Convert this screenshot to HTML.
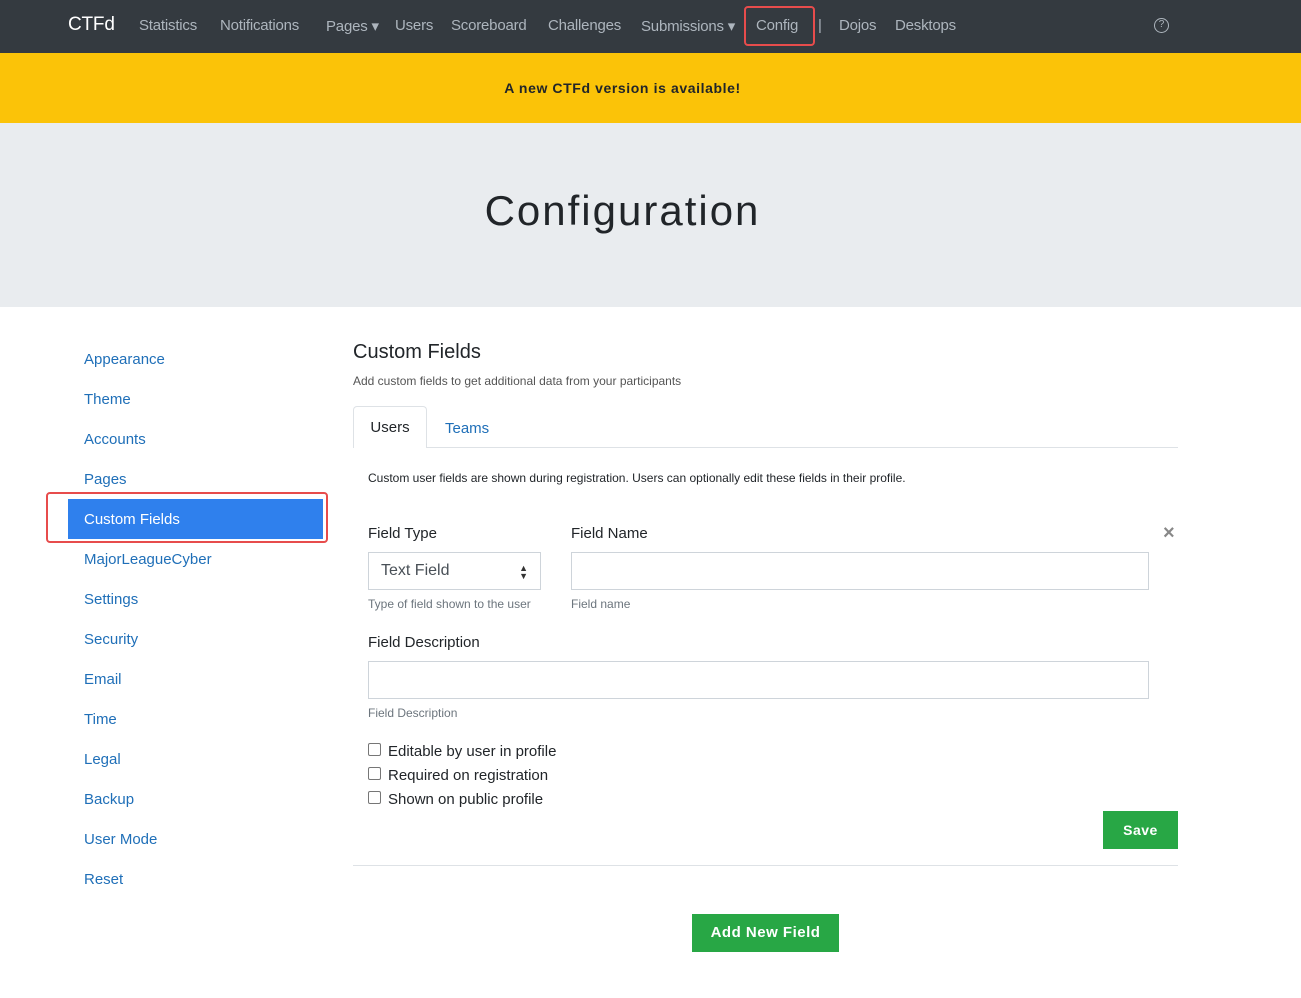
<!DOCTYPE html>
<html><head><meta charset="utf-8"><style>
*{box-sizing:border-box}
body{margin:0;width:1301px;height:998px;overflow:hidden;font-family:"Liberation Sans",sans-serif;background:#fff;color:#212529}
.nav{height:53px;background:#343a40;position:relative}
.nav span{position:absolute;top:17px;font-size:15px;color:#adb5bd;letter-spacing:-0.2px}
.brand{color:#fff!important;font-size:19px!important;top:14px!important}
.banner{height:70px;background:#fbc308}
.banner div{width:1245px;text-align:center;line-height:70px;font-weight:bold;font-size:14px;letter-spacing:0.6px}
.jumbo{height:184px;background:#e9ecef}
.jumbo h1{width:1245px;text-align:center;margin:0;padding-top:64px;font-weight:normal;font-size:42px;letter-spacing:2px;color:#212529}
.side a{position:absolute;left:84px;font-size:15px;color:#1f6fb8;text-decoration:none}
.abs{position:absolute}
.inp{position:absolute;border:1px solid #ced4da;background:#fff}
.small{font-size:12px;color:#6c757d}
.lbl{font-size:15px}
.btn{position:absolute;background:#28a745;color:#fff;font-weight:bold;font-size:14px;text-align:center;letter-spacing:0.5px}
.cb{position:absolute;left:368px;width:13px;height:13px;border:1px solid #767676;border-radius:2px;background:#fff}
</style></head><body>
<div class="nav">
<span class="brand" style="left:68px">CTFd</span>
<span style="left:139px">Statistics</span>
<span style="left:220px">Notifications</span>
<span style="left:326px">Pages ▾</span>
<span style="left:395px">Users</span>
<span style="left:451px">Scoreboard</span>
<span style="left:548px">Challenges</span>
<span style="left:641px">Submissions ▾</span>
<span style="left:756px">Config</span>
<span style="left:818px">|</span>
<span style="left:839px">Dojos</span>
<span style="left:895px">Desktops</span>
<div class="abs" style="left:744px;top:6px;width:71px;height:40px;border:2.5px solid #e74c4c;border-radius:4px"></div>
<div class="abs" style="left:1154px;top:18px;width:15px;height:15px;border:1.5px solid #adb5bd;border-radius:50%;font-size:10px;color:#adb5bd;text-align:center;line-height:12px">?</div>
</div>
<div class="banner"><div>A new CTFd version is available!</div></div>
<div class="jumbo"><h1>Configuration</h1></div>
<div class="side">
<a style="top:351px">Appearance</a>
<a style="top:391px">Theme</a>
<a style="top:431px">Accounts</a>
<a style="top:471px">Pages</a>
<div class="abs" style="left:68px;top:499px;width:255px;height:40px;background:#2f80ed"></div>
<a style="top:511px;color:#fff">Custom Fields</a>
<div class="abs" style="left:46px;top:492px;width:282px;height:51px;border:2.5px solid #e74c4c;border-radius:4px"></div>
<a style="top:551px">MajorLeagueCyber</a>
<a style="top:591px">Settings</a>
<a style="top:631px">Security</a>
<a style="top:671px">Email</a>
<a style="top:711px">Time</a>
<a style="top:751px">Legal</a>
<a style="top:791px">Backup</a>
<a style="top:831px">User Mode</a>
<a style="top:871px">Reset</a>
</div>
<div class="abs" style="left:353px;top:341px;font-size:20px">Custom Fields</div>
<div class="abs small" style="left:353px;top:374px;color:#555">Add custom fields to get additional data from your participants</div>
<div class="abs" style="left:353px;top:447px;width:825px;border-top:1px solid #dee2e6"></div>
<div class="abs" style="left:353px;top:406px;width:74px;height:42px;border:1px solid #dee2e6;border-bottom:none;border-radius:4px 4px 0 0;background:#fff;font-size:15px;text-align:center;line-height:42px">Users</div>
<div class="abs" style="left:445px;top:420px;font-size:15px;color:#1f6fb8">Teams</div>
<div class="abs" style="left:368px;top:471px;font-size:12px">Custom user fields are shown during registration. Users can optionally edit these fields in their profile.</div>
<div class="abs lbl" style="left:368px;top:525px">Field Type</div>
<div class="abs lbl" style="left:571px;top:525px">Field Name</div>
<div class="abs" style="left:1163px;top:522px;font-size:20px;color:#888;font-weight:bold">×</div>
<div class="inp" style="left:368px;top:552px;width:173px;height:38px;font-size:16px;padding:9px 12px;color:#495057">Text Field<span style="position:absolute;right:12px;top:11px;font-size:9px;line-height:8px;color:#333">▲<br>▼</span></div>
<div class="inp" style="left:571px;top:552px;width:578px;height:38px"></div>
<div class="abs small" style="left:368px;top:597px">Type of field shown to the user</div>
<div class="abs small" style="left:571px;top:597px">Field name</div>
<div class="abs lbl" style="left:368px;top:634px">Field Description</div>
<div class="inp" style="left:368px;top:661px;width:781px;height:38px"></div>
<div class="abs small" style="left:368px;top:706px">Field Description</div>
<div class="cb" style="top:743px"></div><div class="abs lbl" style="left:388px;top:743px">Editable by user in profile</div>
<div class="cb" style="top:767px"></div><div class="abs lbl" style="left:388px;top:767px">Required on registration</div>
<div class="cb" style="top:791px"></div><div class="abs lbl" style="left:388px;top:791px">Shown on public profile</div>
<div class="btn" style="left:1103px;top:811px;width:75px;height:38px;line-height:38px">Save</div>
<div class="abs" style="left:353px;top:865px;width:825px;border-top:1px solid #dee2e6"></div>
<div class="btn" style="left:692px;top:914px;width:147px;height:38px;line-height:38px;font-size:15px">Add New Field</div>
</body></html>
